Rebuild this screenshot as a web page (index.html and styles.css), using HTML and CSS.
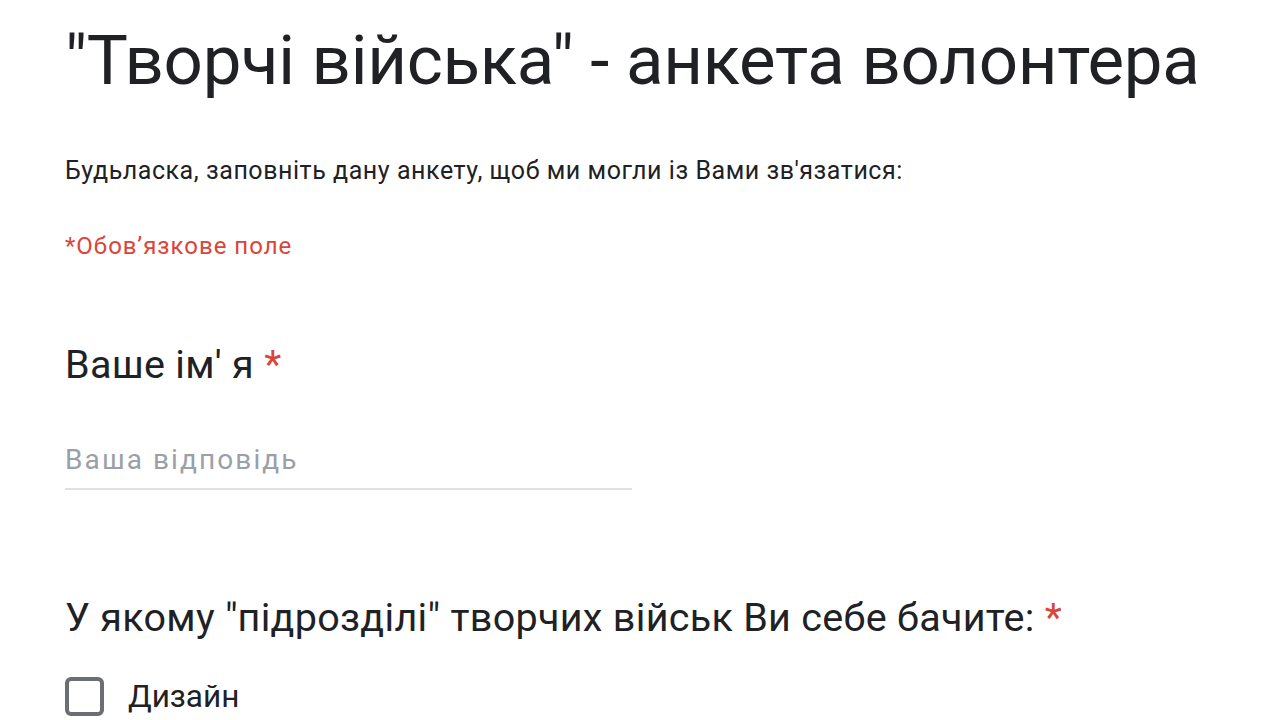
FILE: index.html
```html
<!DOCTYPE html>
<html lang="uk">
<head>
<meta charset="utf-8">
<title>Творчі війська - анкета волонтера</title>
<link rel="stylesheet" href="styles.css">
</head>
<body>
<main class="form">
  <header class="form-header">
    <h1 class="form-title">"Творчі війська" - анкета волонтера</h1>
    <p class="form-desc">Будьласка, заповніть дану анкету, щоб ми могли із Вами зв'язатися:</p>
    <p class="form-required">*Обов’язкове поле</p>
  </header>
  <section class="question">
    <h2 class="q-title">Ваше ім' я <span class="star">*</span></h2>
    <div class="text-input">
      <span class="placeholder">Ваша відповідь</span>
    </div>
  </section>
  <section class="question q-second">
    <h2 class="q-title">У якому "підрозділі" творчих військ Ви себе бачите: <span class="star">*</span></h2>
    <label class="option">
      <span class="checkbox"></span>
      <span class="option-label">Дизайн</span>
    </label>
  </section>
</main>
</body>
</html>
```

FILE: styles.css
```css
html, body {
  margin: 0;
  padding: 0;
  background: #ffffff;
}
body {
  font-family: Roboto, "Noto Sans", Arial, sans-serif;
  color: #202124;
  overflow: hidden;
}
.form {
  padding: 16px 0 0 65px;
}
.form-title {
  margin: 0;
  font-weight: 400;
  font-size: 69px;
  line-height: 90px;
  letter-spacing: -0.3px;
  color: #202124;
}
.form-desc {
  margin: 50px 0 0;
  font-size: 25px;
  line-height: 30px;
  letter-spacing: 0.55px;
  color: #202124;
}
.form-required {
  margin: 45px 0 0;
  font-size: 24px;
  line-height: 30px;
  letter-spacing: 1px;
  color: #db4437;
}
.question {
  margin-top: 80px;
}
.q-title {
  margin: 0;
  font-weight: 400;
  font-size: 39.5px;
  line-height: 48px;
  letter-spacing: 0.3px;
  color: #202124;
}
.star {
  color: #db4437;
}
.text-input {
  width: 567px;
  height: 44px;
  margin-top: 55px;
  border-bottom: 2px solid #e0e0e0;
}
.placeholder {
  display: block;
  font-size: 28px;
  line-height: 32px;
  letter-spacing: 2.1px;
  color: #9aa0a6;
}
.q-second {
  margin-top: 104px;
}
.option {
  display: flex;
  align-items: center;
  gap: 24px;
  margin-top: 35px;
}
.checkbox {
  width: 31px;
  height: 31px;
  border: 4px solid #6b6e72;
  border-radius: 6px;
}
.option-label {
  font-size: 31.5px;
  line-height: 37px;
  color: #202124;
}
```
